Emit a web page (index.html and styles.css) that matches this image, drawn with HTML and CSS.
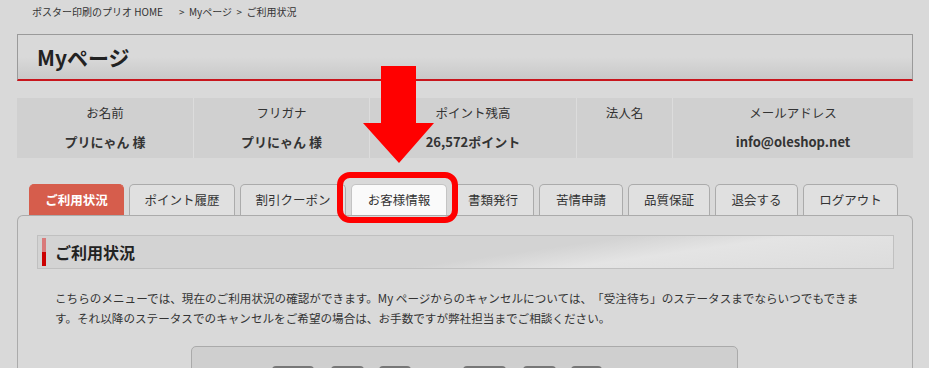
FILE: index.html
```html
<!DOCTYPE html>
<html>
    <head>
        <meta charset="utf-8">
        <link rel="stylesheet" href="styles.css">
    </head>
    <body>
        <div class="page">
            <div class="crumb">ポスター印刷のプリオ HOME<span class="sep">&gt;&nbsp; Myページ &nbsp;&gt;&nbsp; ご利用状況</span></div>

            <h1 class="title">Myページ</h1>

            <div class="info">
                <div class="cell"><span class="label">お名前</span><span class="value">プリにゃん 様</span></div>
                <div class="cell"><span class="label">フリガナ</span><span class="value">プリにゃん 様</span></div>
                <div class="cell"><span class="label">ポイント残高</span><span class="value">26,572ポイント</span></div>
                <div class="cell"><span class="label">法人名</span><span class="value"></span></div>
                <div class="cell"><span class="label">メールアドレス</span><span class="value">info@oleshop.net</span></div>
            </div>

            <ul class="tabs">
                <li class="tab current w95">ご利用状況</li>
                <li class="tab w106">ポイント履歴</li>
                <li class="tab w106">割引クーポン</li>
                <li class="tab white w96">お客様情報</li>
                <li class="tab w82">書類発行</li>
                <li class="tab w84">苦情申請</li>
                <li class="tab w82">品質保証</li>
                <li class="tab w83">退会する</li>
                <li class="tab w95">ログアウト</li>
            </ul>

            <div class="panel">
                <h2 class="heading"><span class="bar"></span>ご利用状況</h2>
                <p class="lead">こちらのメニューでは、現在のご利用状況の確認ができます。My ページからのキャンセルについては、「受注待ち」のステータスまでならいつでもできます。それ以降のステータスでのキャンセルをご希望の場合は、お手数ですが弊社担当までご相談ください。</p>
                <div class="status">
                    <span class="chip c1"></span><span class="chip c2"></span><span class="chip c3"></span>
                    <span class="chip c4"></span><span class="chip c5"></span><span class="chip c6"></span>
                </div>
            </div>
        </div>

        <!-- annotation: arrow + ring over the お客様情報 tab -->
        <svg class="arrow" width="74" height="100" viewBox="0 0 74 100">
            <polygon points="19,0 54,0 54,57 72,57 37,97 1,57 19,57" fill="#ff0000"/>
        </svg>
        <div class="ring"></div>
    </body>
</html>
```

FILE: styles.css
```css
body {
    margin: 0;
    background: #d9d9d9;
    color: #333;
    font-family: "Noto Sans CJK JP", "Noto Sans", sans-serif;
}

.page {
    width: 896px;
    padding-left: 17px;
}

.crumb {
    height: 26px;
    line-height: 24px;
    padding-left: 15px;
    font-size: 10px;
    color: #333;
}
.crumb .sep {
    margin-left: 16px;
}

.title {
    margin: 8px 0 0 0;
    height: 44px;
    line-height: 44px;
    padding-left: 19px;
    border: 1px solid #9a9a9a;
    border-bottom: 2px solid #c8161d;
    background: linear-gradient(#d9d9d9 50%, #c9c9c9);
    font-size: 21px;
    font-weight: bold;
    color: #222;
}

.info {
    margin-top: 17px;
    display: grid;
    grid-template-columns: 176px 176px 207px 96px 241px;
    height: 60px;
    background: #d0d0d0;
}
.info .cell {
    display: flex;
    flex-direction: column;
    align-items: center;
    border-left: 1px solid #dcdcdc;
    padding-top: 4px;
    font-size: 12.5px;
}
.info .cell:first-child {
    border-left: none;
}
.info .label {
    height: 22px;
    line-height: 22px;
}
.info .value {
    margin-top: 7px;
    height: 22px;
    line-height: 22px;
    font-weight: bold;
    font-size: 13px;
}

.tabs {
    list-style: none;
    margin: 26px 0 0 0;
    padding: 0 0 0 12px;
    display: flex;
    gap: 5px;
    height: 31px;
}
.tab {
    box-sizing: border-box;
    height: 31px;
    border: 1px solid #ababab;
    border-bottom: none;
    border-radius: 5px 5px 0 0;
    background: #e0e0e0;
    text-align: center;
    line-height: 30px;
    font-size: 12.5px;
    color: #333;
}
.tab.current {
    background: #d65d4c;
    border-color: #d65d4c;
    color: #fff;
    font-weight: bold;
}
.tab.white {
    background: #fafafa;
    border-color: #c4c4c4;
}
.w95 { width: 95px; }
.w106 { width: 106px; }
.w96 { width: 96px; }
.w82 { width: 82px; }
.w84 { width: 84px; }
.w83 { width: 83px; }

.panel {
    border: 1px solid #ababab;
    border-bottom: none;
    border-radius: 6px 6px 0 0;
    padding: 19px 18px 0 19px;
    height: 200px;
}

.heading {
    margin: 0;
    height: 32px;
    display: flex;
    align-items: center;
    border: 1px solid #c0c0c0;
    background: linear-gradient(172deg, #d3d3d3 55%, #e4e4e4 70%, #dcdcdc);
    font-size: 16px;
    font-weight: bold;
    color: #222;
}
.heading .bar {
    width: 4px;
    height: 28px;
    margin: 0 9px 0 4px;
    background: linear-gradient(#d97a7a 50%, #c00 50%);
}

.lead {
    margin: 19px 0 0 0;
    padding: 0 20px 0 18px;
    font-size: 11.6px;
    line-height: 20px;
    color: #333;
    text-spacing-trim: space-all;
}

.status {
    margin: 18px 0 0 154px;
    width: 545px;
    height: 60px;
    border: 1px solid #aaa;
    border-radius: 5px;
    background: #cfcfcf;
    position: relative;
}
.chip {
    position: absolute;
    top: 19px;
    height: 8px;
    border-radius: 4px 4px 0 0;
    background: #777;
}
.c1 { left: 80px; width: 42px; }
.c2 { left: 139px; width: 33px; }
.c3 { left: 187px; width: 32px; }
.c4 { left: 271px; width: 43px; }
.c5 { left: 331px; width: 33px; }
.c6 { left: 379px; width: 31px; }

.arrow {
    position: absolute;
    left: 362px;
    top: 66px;
}
.ring {
    position: absolute;
    left: 337px;
    top: 172px;
    width: 109px;
    height: 39px;
    border: 6px solid #ff0000;
    border-radius: 13px;
}
```
